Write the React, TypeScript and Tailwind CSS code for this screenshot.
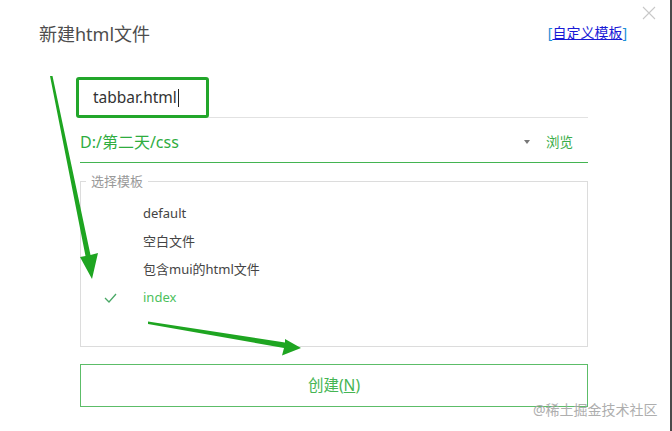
import React from 'react';

const templates = [
  { name: 'default', active: false },
  { name: '空白文件', active: false },
  { name: '包含mui的html文件', active: false },
  { name: 'index', active: true },
];

export default function App() {
  return (
    <div
      className="relative w-[672px] h-[431px] overflow-hidden bg-white border-r-2 border-[#4a4a4a]"
      style={{ fontFamily: '"Noto Sans", "Noto Sans CJK SC", sans-serif' }}
    >
      {/* Close */}
      <button className="absolute right-[14px] top-[6px] text-[#c8c8c8]">
        <svg className="w-[14px] h-[14px]" viewBox="0 0 14 14" fill="none" stroke="currentColor" strokeWidth={1.1}>
          <path d="M1 1l12 12M13 1L1 13" />
        </svg>
      </button>

      {/* Header */}
      <div className="flex items-end justify-between pl-[39px] pr-[43px] pt-[20px] h-[46px]">
        <h1 className="text-[18px] leading-[24px] text-[#4d4d4d]">新建html文件</h1>
        <a className="text-[14px] leading-[20px] mb-[3px] text-[#1a1ad6]">
          <span className="text-[#1a8fd6]">[</span>
          <span className="underline">自定义模板</span>
          <span className="text-[#1a8fd6]">]</span>
        </a>
      </div>

      {/* Body */}
      <div className="ml-[80px] w-[508px] mt-[32px]">
        {/* File name */}
        <div className="relative h-[40px] border-b border-[#e2e2e2] flex items-center pl-[13px]">
          <span className="text-[15.5px] text-[#333]">tabbar.html</span>
          <span className="w-px h-[18px] bg-[#222] ml-[1px]" />
          <div className="absolute left-[-4px] top-[-1px] w-[133px] h-[41px] border-[3px] border-[#22a62a] rounded-[3px]" />
        </div>

        {/* Path */}
        <div className="h-[45px] border-b border-[#43b451] flex items-center pt-[4px]">
          <span className="text-[16px] text-[#2fad3f] flex-1">D:/第二天/css</span>
          <span className="w-0 h-0 border-l-[3px] border-r-[3px] border-t-[4px] border-l-transparent border-r-transparent border-t-[#777] mr-[16px]" />
          <span className="text-[13.5px] text-[#3aad48] mr-[15px]">浏览</span>
        </div>

        {/* Templates */}
        <fieldset className="mt-[11px] h-[173px] border border-[#dcdcdc] px-0 pt-[12px]">
          <legend className="ml-[5px] px-[5px] text-[13px] leading-[14px] text-[#999]">选择模板</legend>
          <ul className="flex flex-col">
            {templates.map((t) => (
              <li key={t.name} className="h-[28px] flex items-center">
                <span className="w-[62px] flex justify-end pr-[26px]">
                  {t.active && (
                    <svg className="w-[13px] h-[10px]" viewBox="0 0 13 10" fill="none" stroke="#4aa866" strokeWidth={1.3}>
                      <path d="M1 5l4 4L12 1" />
                    </svg>
                  )}
                </span>
                <span className={`text-[13px] ${t.active ? 'text-[#4cbf5c]' : 'text-[#444]'}`}>{t.name}</span>
              </li>
            ))}
          </ul>
        </fieldset>

        {/* Create */}
        <button className="mt-[17px] w-full h-[43px] border border-[#5cbd68] text-[15.5px] text-[#45b553]">
          创建(<span className="underline">N</span>)
        </button>
      </div>

      {/* Annotation arrows */}
      <svg className="absolute left-0 top-0 pointer-events-none" width="672" height="431">
        <polygon points="50,76 52.5,76 90.5,255 98,253 92,279 80,257 85.5,256" fill="#1ea521" />
        <polygon points="148,321.5 148,324 284,348 282,355.5 301,348 285,339 285,342.5" fill="#1ea521" />
      </svg>

      {/* Watermark */}
      <div className="absolute left-[533px] top-[401px] text-[14px] leading-[18px] text-[#a6a6a6] opacity-90">@稀土掘金技术社区</div>
    </div>
  );
}
